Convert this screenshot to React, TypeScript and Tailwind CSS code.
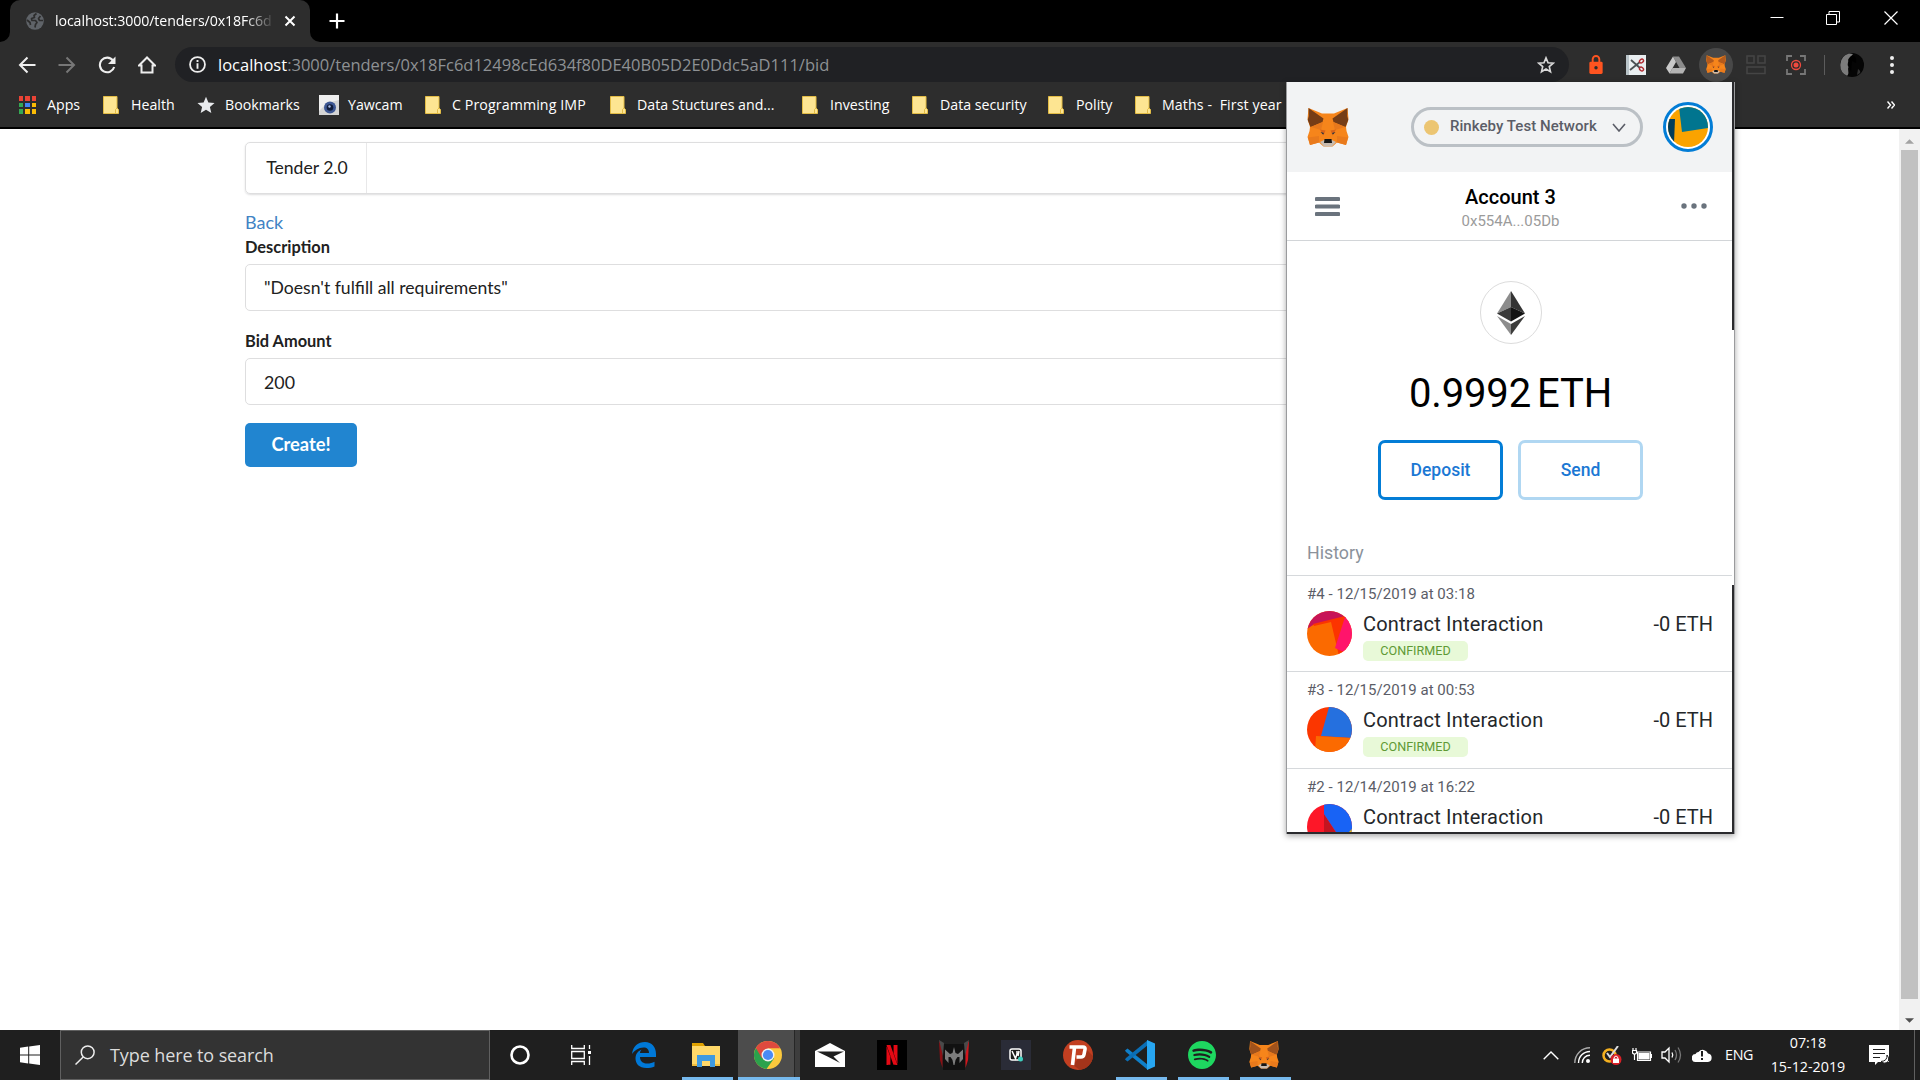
import React from "react";
import { SiNetflix, SiSpotify } from "react-icons/si";

function Fox({ className, ear = "#763d16" }: { className: string; ear?: string }) {
  return (
    <svg viewBox="0 0 42 39" className={className}>
      <path d="M1.500 0 15 5.500H27L40.500 0 41.500 11 39 19 39.500 23 41.500 29 39 37 30 34.500 25.500 38.500H16.500L12 34.500 3 37 .5 29 2.500 23 3 19 .5 11Z" fill="#f6851b" />
      <path d="M1.500 0 16.500 10.500 15.500 14 3.500 19 .7 12 1.800 8ZM40.500 0 25.500 10.500 26.500 14 38.500 19 41.300 12 40.200 8Z" fill={ear} />
      <path d="M4 19 16 14 14 22ZM38 19 26 14 28 22Z" fill="#e8791c" />
      <path d="M13 21.500 18.500 22.500 16.500 27.500ZM29 21.500 23.500 22.500 25.500 27.500Z" fill="#d9641a" />
      <path d="M1 29.500 12 28 12 34.500 3 37ZM41 29.500 30 28 30 34.500 39 37Z" fill="#e97a1c" />
      <path d="M13.500 24 17 25 16 26.500ZM28.500 24 25 25 26 26.500Z" fill="#233447" />
      <path d="M13 34 17 32H25L29 34 25 38.500H17Z" fill="#c8bbaf" />
      <path d="M17.500 31H24.500L25 35H17Z" fill="#161616" />
    </svg>
  );
}

function Folder() {
  return (
    <svg viewBox="0 0 16 18" className="h-[18px] w-4 shrink-0">
      <path d="M.5 .5H14V12L15.5 13.5V17.5H.5Z" fill="#fde592" stroke="#e3bc45" />
      <path d="M12.5 17.5V13.5L14 12" fill="none" stroke="#e3bc45" />
    </svg>
  );
}

function AppsGrid() {
  const colors = ["#ea4335", "#ea4335", "#ea4335", "#34a853", "#4285f4", "#fbbc05", "#34a853", "#fbbc05", "#fbbc05"];
  return (
    <div className="grid w-[17px] shrink-0 grid-cols-3 gap-0.5">
      {colors.map((c, i) => (
        <span key={i} className="h-[4.5px]" style={{ background: c }} />
      ))}
    </div>
  );
}

function StarSolid() {
  return (
    <svg viewBox="0 0 24 24" className="h-[18px] w-[18px] shrink-0 fill-[#e8eaed]">
      <path d="M12 1l3.2 7.6 8.2.7-6.2 5.4 1.9 8L12 18.4 4.9 22.7l1.9-8L.6 9.3l8.2-.7z" />
    </svg>
  );
}

function Yawcam() {
  return (
    <svg viewBox="0 0 20 20" className="h-5 w-5 shrink-0">
      <rect width="20" height="20" fill="#d4d4d4" />
      <path d="M0 0H20V5L8 8 0 16Z" fill="#efefef" />
      <circle cx="11" cy="12.5" r="6" fill="#3d5793" />
      <circle cx="11" cy="12.5" r="3.3" fill="#101c3a" />
      <circle cx="10.5" cy="11.5" r="1.2" fill="#a9bde8" />
    </svg>
  );
}

function TabStrip() {
  return (
    <div className="flex h-[42px] shrink-0 bg-black pl-[10px]">
      <div className="relative flex h-full w-[300px] items-center rounded-t-[10px] bg-[#2d2d2d] pl-4">
        <svg viewBox="0 0 10 10" className="absolute bottom-0 -left-[10px] h-[10px] w-[10px] fill-[#2d2d2d]"><path d="M10 0V10H0A10 10 0 0 0 10 0Z" /></svg>
        <svg viewBox="0 0 10 10" className="absolute -right-[10px] bottom-0 h-[10px] w-[10px] fill-[#2d2d2d]"><path d="M0 0V10H10A10 10 0 0 1 0 0Z" /></svg>
        <svg viewBox="0 0 18 18" className="h-[18px] w-[18px]">
          <circle cx="9" cy="9" r="8.8" fill="#5f6368" />
          <path d="M10.5 1.5 8 3.500 8.500 5.500 5.500 6.500 6 8.500H9.500L11 10.500 9.500 12.500 9 15.500M14.500 4 12.500 6.500 13.500 8.500H17M1 8 4 10.500 4.500 13" stroke="#2d2d2d" strokeWidth="1.7" fill="none" strokeLinejoin="round" />
        </svg>
        <div className="ml-[11px] w-[220px] overflow-hidden text-[14.2px] tracking-[-0.1px] whitespace-nowrap text-white [mask-image:linear-gradient(to_right,black_190px,transparent)]">
          localhost:3000/tenders/0x18Fc6d
        </div>
        <svg viewBox="0 0 12 12" className="ml-[9px] h-3 w-3"><path d="M1.5 1.5 10.5 10.5M10.5 1.5 1.5 10.5" stroke="#fff" strokeWidth="2" /></svg>
      </div>
      <svg viewBox="0 0 16 16" className="mt-[13px] ml-[19px] h-4 w-4"><path d="M8 .5V15.5M.5 8H15.5" stroke="#fff" strokeWidth="2.2" /></svg>
      <div className="ml-auto flex pt-[11px]">
        <svg viewBox="0 0 14 14" className="mr-[42px] h-[14px] w-[14px]"><path d="M.5 6.5H13.5" stroke="#fff" /></svg>
        <svg viewBox="0 0 14 14" className="mr-[44px] h-[14px] w-[14px]"><path d="M.5 3.5H10.5V13.5H.5ZM3 3.5V.5H13.5V11H10.5" stroke="#fff" fill="none" /></svg>
        <svg viewBox="0 0 14 14" className="mr-[22px] h-[14px] w-[14px]"><path d="M.5 .5 13.5 13.5M13.5 .5 .5 13.5" stroke="#fff" strokeWidth="1.2" /></svg>
      </div>
    </div>
  );
}

function Cell({ children }: { children: React.ReactNode }) {
  return <div className="flex w-10 shrink-0 items-center justify-center">{children}</div>;
}

function Toolbar() {
  return (
    <div className="flex h-[45px] shrink-0 items-stretch bg-[#2d2d2d] pl-[7px]">
      <Cell><svg viewBox="0 0 18 18" className="h-[18px] w-[18px]"><path d="M17.5 9H2M9.5 1.5 2 9 9.5 16.5" fill="none" stroke="#eee" strokeWidth="2" /></svg></Cell>
      <Cell><svg viewBox="0 0 18 18" className="h-[18px] w-[18px]"><path d="M.5 9H16M8.5 1.5 16 9 8.5 16.5" fill="none" stroke="#777" strokeWidth="2" /></svg></Cell>
      <Cell><svg viewBox="0 0 18 18" className="h-[18px] w-[18px]"><path d="M15 4.5A7.3 7.3 0 1 0 16.2 11" fill="none" stroke="#eee" strokeWidth="2.1" /><path d="M17.5 .5V8H10Z" fill="#eee" /></svg></Cell>
      <Cell><svg viewBox="0 0 18 18" className="h-[18px] w-[18px]"><path d="M1 9.5 9 1.5 17 9.5H14.5V16.5H3.5V9.5Z" fill="none" stroke="#eee" strokeWidth="2" /></svg></Cell>
      <div className="mt-[5px] ml-[8px] flex h-[35px] w-[1394px] items-center rounded-full bg-[#202124] px-[14px]">
        <svg viewBox="0 0 18 18" className="h-[17px] w-[17px]"><circle cx="9" cy="9" r="7.9" fill="none" stroke="#eee" strokeWidth="1.9" /><path d="M9 4.3V6.3M9 7.8V13.5" stroke="#eee" strokeWidth="2" /></svg>
        <div className="mt-px ml-3 text-[16.5px] whitespace-nowrap text-[#8e9194]"><span className="text-white">localhost</span>:3000/tenders/0x18Fc6d12498cEd634f80DE40B05D2E0Ddc5aD111/bid</div>
        <svg viewBox="0 0 24 24" className="ml-auto h-[18px] w-[18px]"><path d="M12 2.500l2.700 6.500 7 .6-5.300 4.600 1.600 6.800L12 17.400 6 21l1.600-6.800L2.300 9.600l7-.6z" fill="none" stroke="#d8d8d8" strokeWidth="2.2" /></svg>
      </div>
      <div className="ml-[7px] flex">
        <Cell><svg viewBox="0 0 14 20" className="h-[19px] w-[14px]"><path d="M3.5 8V4.5a3.5 3.5 0 0 1 7 0V8" fill="none" stroke="#ff5420" strokeWidth="2" /><rect y="7" width="14" height="13" rx="1.5" fill="#ff5420" /><circle cx="7" cy="13.5" r="1.8" fill="#2d2d2d" /></svg></Cell>
        <Cell><svg viewBox="0 0 20 20" className="h-5 w-5"><rect width="20" height="20" fill="#e9eef0" /><path d="M0 0H3V20H0Z" fill="#b9c4c9" /><path d="M5 5 14 13M4 15 14 7" stroke="#4a5054" strokeWidth="1.8" /><ellipse cx="15.500" cy="6" rx="2.200" ry="1.700" transform="rotate(-40 15.500 6)" fill="none" stroke="#b02a30" strokeWidth="1.400" /><ellipse cx="15.500" cy="14" rx="2.200" ry="1.700" transform="rotate(40 15.500 14)" fill="none" stroke="#b02a30" strokeWidth="1.400" /></svg></Cell>
        <Cell><svg viewBox="0 0 20 18" className="h-[18px] w-5"><path d="M7 .5H13L20 12H13.5Z" fill="#8c8c8c" /><path d="M7 .5 10 6 3.5 17.5 0 12Z" fill="#c9c9c9" /><path d="M6.5 12H20L17 17.5H3.5Z" fill="#b3b3b3" /></svg></Cell>
        <Cell><div className="flex h-[34px] w-[34px] items-center justify-center rounded-full bg-[#484848]"><Fox className="h-[19px] w-5" ear="#b45a1c" /></div></Cell>
        <Cell><svg viewBox="0 0 20 20" className="h-5 w-5"><path d="M1 1H8V8H1ZM12 1H19V8H12ZM1 12H19V18.5H1Z" fill="none" stroke="#454545" strokeWidth="1.5" /></svg></Cell>
        <Cell><svg viewBox="0 0 20 20" className="h-5 w-5"><path d="M1 6V1H6M14 1H19V6M19 14V19H14M6 19H1V14" fill="none" stroke="#777" strokeWidth="1.8" /><circle cx="10" cy="10" r="4.500" fill="none" stroke="#f04a3e" strokeWidth="1.3" /><circle cx="10" cy="10" r="2.5" fill="#f04a3e" /></svg></Cell>
      </div>
      <div className="mt-[13px] ml-[8px] h-5 w-px bg-[#5c5c5c]" />
      <div className="ml-[7px] flex">
        <Cell><svg viewBox="0 0 24 24" className="h-6 w-6"><circle cx="12" cy="12" r="12" fill="#050505" /><path d="M9 .5A12 12 0 0 0 7 22.8C10 20 7 17 8.500 14 6.500 11 9 9 8 7 9 4 12 3 13 1Z" fill="#7c7c7c" /><path d="M10 4C14 1 17 4 16 10L12 8 11 19 8.500 12Z" fill="#000" /><path d="M18 16Q21 18 20 20L17 22Z" fill="#333" /></svg></Cell>
        <Cell><svg viewBox="0 0 4 18" className="h-[18px] w-1 fill-[#eee]"><circle cx="2" cy="2" r="2" /><circle cx="2" cy="9" r="2" /><circle cx="2" cy="16" r="2" /></svg></Cell>
      </div>
    </div>
  );
}

function Bookmarks() {
  const items: [string, React.ReactNode, string][] = [
    ["Apps", <AppsGrid />, "w-[84px] gap-[11px]"],
    ["Health", <Folder />, "w-[94px] gap-[12px]"],
    ["Bookmarks", <StarSolid />, "w-[122px] gap-[10px]"],
    ["Yawcam", <Yawcam />, "w-[106px] gap-[9px]"],
    ["C Programming IMP", <Folder />, "w-[185px] gap-[11px] tracking-[0.1px]"],
    ["Data Stuctures and...", <Folder />, "w-[192px] gap-[11px]"],
    ["Investing", <Folder />, "w-[110px] gap-[12px]"],
    ["Data security", <Folder />, "w-[136px] gap-[12px]"],
    ["Polity", <Folder />, "w-[87px] gap-[12px]"],
    ["Maths -  First year", <Folder />, "w-[160px] gap-[11px] tracking-[0.1px]"],
  ];
  return (
    <div className="flex h-[42px] shrink-0 items-center border-b-2 border-black bg-[#2d2d2d] pb-1 pl-[19px] text-[14.2px] text-white">
      {items.map(([label, icon, cls]) => (
        <div key={label} className={`flex shrink-0 items-center whitespace-pre ${cls}`}>
          {icon}
          <span className="-mt-px">{label}</span>
        </div>
      ))}
      <svg viewBox="0 0 8 8" className="mr-[25px] ml-auto h-2 w-2"><path d="M.5 .5 3.5 4 .5 7.5M4.5 .5 7.5 4 4.5 7.5" fill="none" stroke="#fff" strokeWidth="1.4" /></svg>
    </div>
  );
}

function TenderPage() {
  return (
    <div className="min-w-0 flex-1 pt-[13px] pl-[245px] font-[Lato,sans-serif] text-[#212121]">
      <div className="w-[1409px]">
        <div className="flex h-[52px] rounded-[5px] border border-[#dededf] shadow-[0_1px_2px_rgba(34,36,38,0.15)]">
          <div className="flex w-[121px] items-center justify-center border-r border-[#e8e8e9] pl-0.5 text-[17.6px]">Tender 2.0</div>
        </div>
        <div className="mt-[15px] h-[26px] text-[18px] leading-[26px] text-[#4183c4]">Back</div>
        <div className="mt-[2px] h-[20px] text-[16.4px] leading-[20px] font-bold">Description</div>
        <div className="mt-[7px] flex h-[47px] items-center rounded-[5px] border border-[#dededf] pt-0.5 pl-[18px] text-[17.6px]">"Doesn't fulfill all requirements"</div>
        <div className="mt-[20px] h-[20px] text-[16.4px] leading-[20px] font-bold">Bid Amount</div>
        <div className="mt-[7px] flex h-[47px] items-center rounded-[5px] border border-[#dededf] pt-0.5 pl-[18px] text-[17.8px]">200</div>
        <div className="mt-[18px] flex h-[44px] w-[112px] items-center justify-center rounded-[5px] bg-[#2185d0] text-[18.3px] font-bold text-white">Create!</div>
      </div>
    </div>
  );
}

function Scrollbar() {
  return (
    <div className="flex w-[21px] flex-col items-center bg-[#f1f1f1]">
      <svg viewBox="0 0 10 5" className="mt-[10px] h-[5px] w-[9px]"><path d="M0 5 5 0 10 5Z" fill="#a3a3a3" /></svg>
      <div className="mt-[6px] mb-[19px] w-[17px] flex-1 bg-[#c1c1c1]" />
      <svg viewBox="0 0 10 5" className="mb-[7px] h-[5px] w-[9px]"><path d="M0 0H10L5 5Z" fill="#505050" /></svg>
    </div>
  );
}

function Jazzicon({ id, bg, shapes }: { id: string; bg: string; shapes: [string, string][] }) {
  return (
    <svg viewBox="0 0 45 45" className="h-[45px] w-[45px] shrink-0">
      <clipPath id={id}><circle cx="22.5" cy="22.5" r="22.5" /></clipPath>
      <g clipPath={`url(#${id})`}>
        <rect width="45" height="45" fill={bg} />
        {shapes.map(([d, fill]) => <path key={d} d={d} fill={fill} />)}
      </g>
    </svg>
  );
}

function HistoryItem({ title, icon, height }: { title: string; icon: React.ReactNode; height: string }) {
  return (
    <div className={`shrink-0 border-t border-[#d6d9dc] pr-[19px] pl-5 ${height}`}>
      <div className="mt-[8px] h-5 text-[15px] leading-5 tracking-[0.04px] text-[#5b5d67]">{title}</div>
      <div className="mt-[7px] flex">
        {icon}
        <div className="ml-[11px]">
          <div className="mt-[1px] h-6 text-[20px] leading-6 tracking-[0.2px] text-[#24272a]">Contract Interaction</div>
          <div className="mt-[5px] flex h-5 w-[105px] items-center justify-center rounded-[5px] bg-[#e8f9d8] pt-px text-[12.6px] text-[#5f9a35]">CONFIRMED</div>
        </div>
        <div className="mt-[1px] ml-auto h-6 text-[20px] leading-6 text-[#24272a]">-0 ETH</div>
      </div>
    </div>
  );
}

function Wallet() {
  return (
    <div className="absolute top-[82px] left-[1286px] flex h-[752px] w-[449px] border-l border-[#9a9b9d] bg-white font-[Roboto,sans-serif] shadow-[0_2px_6px_rgba(0,0,0,0.35)]">
      <div className="flex w-[445px] shrink-0 flex-col overflow-hidden border-b-2 border-[#2a2a2d]">
        <div className="flex h-[90px] shrink-0 items-center bg-[#f2f3f4] pl-[20px]">
          <Fox className="h-[39px] w-[42px]" />
          <div className="ml-[62px] flex h-10 w-[232px] items-center rounded-full border-[3px] border-[#bbc0c5] pl-[10px]">
            <span className="h-[15px] w-[15px] rounded-full bg-[#ecc572]" />
            <span className="-mt-0.5 ml-[11px] w-[148px] text-[15px] font-medium tracking-[0.05px] whitespace-nowrap text-[#5b5d67]">Rinkeby Test Network</span>
            <svg viewBox="0 0 14 9" className="ml-[14px] h-[9px] w-[14px]"><path d="M1 1 7 8 13 1" fill="none" stroke="#5b5d67" strokeWidth="1.6" /></svg>
          </div>
          <div className="ml-[20px] flex h-[50px] w-[50px] items-center justify-center rounded-full border-[3px] border-[#037dd6] bg-white">
            <svg viewBox="0 0 40 40" className="h-10 w-10">
              <clipPath id="acct"><circle cx="20" cy="20" r="20" /></clipPath>
              <g clipPath="url(#acct)">
                <rect width="40" height="40" fill="#faa300" />
                <path d="M11 0H40V21L14 25Z" fill="#01758f" />
                <path d="M0 12H7L6 36H0Z" fill="#023d5a" />
              </g>
            </svg>
          </div>
        </div>
        <div className="flex h-[69px] shrink-0 items-center justify-between border-b border-[#d2d5d8] pr-[25px] pl-[28px]">
          <svg viewBox="0 0 25 19" className="h-[19px] w-[25px]"><path d="M1.5 2H23.5M1.5 9.5H23.5M1.5 17H23.5" stroke="#6a737d" strokeWidth="4" strokeLinecap="round" /></svg>
          <div className="pt-[6px] text-center">
            <div className="h-6 text-[20px] leading-6 font-medium text-black">Account 3</div>
            <div className="text-[15px] leading-6 text-[#9b9b9b]">0x554A...05Db</div>
          </div>
          <svg viewBox="0 0 26 6" className="h-[6px] w-[26px] fill-[#6a737d]"><circle cx="3" cy="3" r="2.7" /><circle cx="13" cy="3" r="2.7" /><circle cx="23" cy="3" r="2.7" /></svg>
        </div>
        <div className="flex shrink-0 flex-col items-center pl-[2px]">
          <div className="mt-[40px] flex h-[63px] w-[62px] items-center justify-center rounded-full border border-[#dcdcdc]">
            <svg viewBox="0 0 28 44" className="h-[44px] w-7">
              <path d="M14 0V16L0 22.5Z" fill="#8c8c8c" /><path d="M14 0V16L28 22.5Z" fill="#343434" />
              <path d="M0 22.5 14 16V30.5Z" fill="#393939" /><path d="M28 22.5 14 16V30.5Z" fill="#141414" />
              <path d="M0 25 14 33V44Z" fill="#8c8c8c" /><path d="M28 25 14 33V44Z" fill="#3c3c3b" />
            </svg>
          </div>
          <div className="mt-[26px] flex h-12 gap-[6px] text-[40px] leading-[48px] tracking-[-0.15px] text-black"><span>0.9992</span><span>ETH</span></div>
          <div className="mt-[22px] flex gap-[15px] text-[17.5px] font-medium text-[#1b78d4]">
            <div className="flex h-[60px] w-[125px] items-center justify-center rounded-[7px] border-[3px] border-[#037dd6]">Deposit</div>
            <div className="flex h-[60px] w-[125px] items-center justify-center rounded-[7px] border-[3px] border-[#b0d7f2]">Send</div>
          </div>
        </div>
        <div className="mt-[41px] h-[34px] shrink-0 pl-5 text-[17.8px] leading-6 text-[#8b929b]">History</div>
        <HistoryItem title="#4 - 12/15/2019 at 03:18" height="h-[96px]" icon={<Jazzicon id="j4" bg="#fb6a00" shapes={[["M0 0H45V6L6 14 0 18Z", "#c71457"], ["M6 13 38 5 45 45H32L24 11 7 15Z", "#fc3400"], ["M38 6 45 0V45L28 37Z", "#ff146b"]]} />} />
        <HistoryItem title="#3 - 12/15/2019 at 00:53" height="h-[97px]" icon={<Jazzicon id="j3" bg="#fb3600" shapes={[["M22 0H45V31L14 29Z", "#2570df"], ["M9 29 45 31V45H8Z", "#fb6a00"]]} />} />
        <HistoryItem title="#2 - 12/14/2019 at 16:22" height="h-[97px]" icon={<Jazzicon id="j2" bg="#fd1728" shapes={[["M17 10 30 30 28 45H17Z", "#c41420"], ["M17 0H45V28H29L17 10Z", "#1863f5"], ["M42 28 45 25V35H40Z", "#f5c400"]]} />} />
      </div>
      <div className="flex flex-1 flex-col items-start border-r border-[#9a9b9d]">
        <div className="h-[248px] w-0.5 bg-[#2a2a2d]" />
        <div className="mt-[255px] w-0.5 flex-1 bg-[#2a2a2d]" />
      </div>
    </div>
  );
}

function Task({ children, open, active }: { children: React.ReactNode; open?: boolean; active?: boolean }) {
  return (
    <div className={`flex w-[62px] shrink-0 flex-col items-center ${active ? "bg-[linear-gradient(to_right,#4c4c4c_56px,#262626_56px,#262626_57px,#3d3d3d_57px)]" : ""}`}>
      <div className="flex h-[47px] items-center pt-[3px] pr-[2px]">{children}</div>
      {open && <div className={`h-[3px] bg-[#76b9ed] ${active ? "w-full" : "w-[51px]"}`} />}
    </div>
  );
}

function Taskbar() {
  return (
    <div className="flex h-[50px] shrink-0 bg-[#1f1f1f] text-white">
      <div className="flex w-[60px] items-center justify-center">
        <svg viewBox="0 0 20 20" className="h-5 w-5 fill-white"><path d="M0 2.8 8.2 1.6V9.5H0ZM9.2 1.5 20 0V9.5H9.2ZM0 10.5H8.2V18.4L0 17.2ZM9.2 10.5H20V20L9.2 18.5Z" /></svg>
      </div>
      <div className="flex w-[430px] items-center border border-[#606060] bg-[#333] pl-[14px]">
        <svg viewBox="0 0 20 20" className="h-5 w-5"><circle cx="12.7" cy="7.3" r="6.4" fill="none" stroke="#eee" strokeWidth="1.5" /><path d="M8.2 12 .5 19.5" stroke="#eee" strokeWidth="1.5" /></svg>
        <span className="ml-[15px] text-[18px] tracking-[-0.1px] text-[#dcdcdc]">Type here to search</span>
      </div>
      <Task><svg viewBox="0 0 20 20" className="h-5 w-5"><circle cx="10" cy="10" r="8.5" fill="none" stroke="#fff" strokeWidth="2.6" /></svg></Task>
      <Task><svg viewBox="0 0 20 20" className="mr-[3px] h-5 w-5" fill="none" stroke="#fff" strokeWidth="1.3"><path d="M.7 0V3.5H13.3V0M.7 20V16.5H13.3V20M.7 6.5H13.3V13.5H.7ZM18.5 0V4M18.5 11V20" /><path d="M17 6H20V9H17Z" fill="#fff" stroke="none" /></svg></Task>
      <Task>
        <svg viewBox="0 0 24 26" className="h-[26px] w-6"><path d="M0 12C1 4 6 0 13 0 20 0 24 5 24 12V15H8C8 20 12 21.5 15 21.5 18 21.5 20.5 20.8 22.5 19.7V24.5C20 25.6 17.5 26 14.5 26 7 26 3.5 21.5 3.5 16.5 3.5 12 6 9 9.5 7.5 8.5 8.7 8 10 8 11H17C17 7.5 15 5.5 11.5 5.5 6.5 5.5 2.5 8.5 0 12Z" fill="#0078d7" /></svg>
      </Task>
      <Task open>
        <svg viewBox="0 0 28 24" className="h-6 w-7"><path d="M0 0H11L13 3H0Z" fill="#dfa100" /><path d="M0 3H28V23H0Z" fill="#ffd869" /><path d="M5 12H23V24H18V18H10V24H5Z" fill="#3f9ae0" /><path d="M0 21H5V23H0ZM23 21H28V23H23Z" fill="#f2bd3a" /></svg>
      </Task>
      <Task open active>
        <svg viewBox="0 0 28 28" className="h-7 w-7"><circle cx="14" cy="14" r="14" fill="#fbc93d" /><path d="M14 14 1.9 7A14 14 0 0 0 12.5 28L20 17.5Z" fill="#2ba24c" /><path d="M1.9 7A14 14 0 0 1 26.2 7.3H14L8 17.5Z" fill="#df4a3e" /><circle cx="14" cy="14" r="6.5" fill="#f1f1f1" /><circle cx="14" cy="14" r="5.1" fill="#4a8af4" /></svg>
      </Task>
      <Task><svg viewBox="0 0 30 24" className="h-6 w-[30px]"><path d="M0 8 15 0 30 8V24H0Z" fill="#fff" /><path d="M2 8.5H29L18.5 13.5 25 20 12.5 13.5Z" fill="#1f1f1f" /></svg></Task>
      <Task><div className="flex h-[30px] w-[30px] items-center justify-center bg-black"><SiNetflix className="h-[20px] w-[20px] text-[#e50914]" /></div></Task>
      <Task>
        <svg viewBox="0 0 30 30" className="h-[30px] w-[30px]"><path d="M4 4H26V30H4Z" fill="#111" /><path d="M0 1 3.500 5V28L1 20Z" fill="#8b1015" /><path d="M30 1 26.500 5V28L29 20Z" fill="#d3161c" /><path d="M0 0 5 3 4 16Z" fill="#4a4a4a" /><path d="M30 0 25 3 26 16Z" fill="#4a4a4a" /><path d="M15 7 16.500 13 19 14 24 9.500V19L20.500 23V17H18.500L16.500 20 15.500 25H14.500L13.500 20 11.500 17H9.500V23L6 19V9.500L11 14 13.500 13Z" fill="#7d7d7d" /></svg>
      </Task>
      <Task>
        <div className="flex h-[30px] w-[30px] items-center justify-center bg-[#2a2c37]"><svg viewBox="0 0 14 14" className="h-[14px] w-[14px]"><rect x="1" y="1" width="11" height="11" rx="2" fill="#1c1c1c" stroke="#fff" strokeWidth="1.5" /><path d="M3 3 6.5 10.5 8 6V3M10 3 9 8" stroke="#fff" strokeWidth="1.5" fill="none" /><circle cx="11.5" cy="11" r="2.5" fill="#3fd0c0" /></svg></div>
      </Task>
      <Task><svg viewBox="0 0 30 30" className="h-[30px] w-[30px]"><circle cx="15" cy="15" r="15" fill="#c23f21" /><path d="M10 25 23 9 30 16A15 15 0 0 1 17 30Z" fill="#a3341a" /><path d="M6.5 7H20Q22.5 7 22 9.5L21 14.5Q20.5 17 18 17H13.5M11.5 7.5 9.5 25" fill="none" stroke="#fff" strokeWidth="3.6" /></svg></Task>
      <Task open>
        <svg viewBox="0 0 30 30" className="h-[30px] w-[30px]"><path d="M0 10.5 2.5 8.5 23 25V30L1 12Z" fill="#0f7fc9" /><path d="M0 19.5 2.5 21.5 23 5V0L1 18Z" fill="#0a6eb5" /><path d="M22 0 30 3.5V26.5L22 30Z" fill="#27a6f2" /></svg>
      </Task>
      <Task open><SiSpotify className="h-7 w-7 text-[#1ed760]" /></Task>
      <Task open><Fox className="h-7 w-[30px]" ear="#a0521c" /></Task>
      <div className="ml-auto flex items-center">
        <svg viewBox="0 0 16 9" className="h-[9px] w-4"><path d="M.7 8.3 8 1 15.3 8.3" fill="none" stroke="#fff" strokeWidth="1.4" /></svg>
        <svg viewBox="0 0 16 16" className="ml-[15px] h-4 w-4" fill="none" strokeWidth="1.4"><path d="M.8 16C.8 7.5 7.5 .8 16 .8" stroke="#aaa" /><path d="M4.5 16C4.5 9.5 9.5 4.5 16 4.5M8.3 16C8.3 11.5 11.5 8.3 16 8.3" stroke="#fff" /><circle cx="14" cy="14" r="2" fill="#fff" stroke="none" /></svg>
        <svg viewBox="0 0 20 19" className="ml-[12px] h-[19px] w-5"><circle cx="7.5" cy="9.5" r="6" fill="none" stroke="#f5b120" strokeWidth="2.5" /><path d="M5 7 8 11 16 0" fill="none" stroke="#ddd" strokeWidth="2" /><circle cx="14" cy="13.5" r="5.5" fill="#d92027" /><path d="M11 12.5H17V17H11Z" fill="#fff" /><path d="M12.3 12.5V11Q14 9 15.7 11V12.5" stroke="#fff" fill="none" /></svg>
        <svg viewBox="0 0 20 14" className="ml-[10px] h-[14px] w-5" fill="none" stroke="#fff" strokeWidth="1.2"><path d="M5.5 4H18.5V12.5H5.5Z" /><path d="M7 5.5H17V11H7Z" fill="#fff" /><path d="M19.5 6V10M1 0V2.5M4 0V2.5M.5 2.5H4.5V5L2.5 6.5 .5 5ZM2.5 6.5V12" /></svg>
        <svg viewBox="0 0 21 18" className="ml-[9px] h-[18px] w-[21px]" fill="none" strokeWidth="1.3"><path d="M1 6H4L8 2V16L4 12H1Z" stroke="#fff" /><path d="M11 6.5Q12.5 9 11 11.5" stroke="#fff" /><path d="M14 4Q17 9 14 14M17 1.5Q22 9 17 16.5" stroke="#777" /></svg>
        <svg viewBox="0 0 20 14" className="ml-[10px] h-[14px] w-5"><path d="M4 14A4 4 0 0 1 3.5 6 4 4 0 0 1 6.5 4 5.5 5.5 0 0 1 16 5.5 4.3 4.3 0 0 1 16 14Z" fill="#fff" /><path d="M10 3V8.5M10 10V12" stroke="#1f1f1f" strokeWidth="2" /></svg>
        <span className="ml-[13px] w-[45px] text-[14.3px] tracking-[-0.3px]">ENG</span>
        <div className="w-[76px] text-center text-[14.3px] leading-6 whitespace-nowrap"><div>07:18</div><div>15-12-2019</div></div>
        <svg viewBox="0 0 20 20" className="ml-[23px] h-5 w-5"><path d="M0 0H20V17H9L6 20V17H0Z" fill="#fff" /><path d="M4 4.5H16M4 8.5H16M4 12.5H11" stroke="#1f1f1f" strokeWidth="1.2" /><path d="M18 10Q18.5 16 12 16.5 16 20 19.5 16 20.5 12.5 18 10Z" fill="#fff" stroke="#1f1f1f" /></svg>
        <div className="ml-[25px] h-[50px] w-px bg-[#606060]" />
        <div className="w-[5px]" />
      </div>
    </div>
  );
}

export default function App() {
  return (
    <div className="relative flex h-[1080px] w-[1920px] flex-col overflow-hidden bg-white font-['Open_Sans',sans-serif]">
      <TabStrip />
      <Toolbar />
      <Bookmarks />
      <div className="flex min-h-0 flex-1">
        <TenderPage />
        <Scrollbar />
      </div>
      <Taskbar />
      <Wallet />
    </div>
  );
}
